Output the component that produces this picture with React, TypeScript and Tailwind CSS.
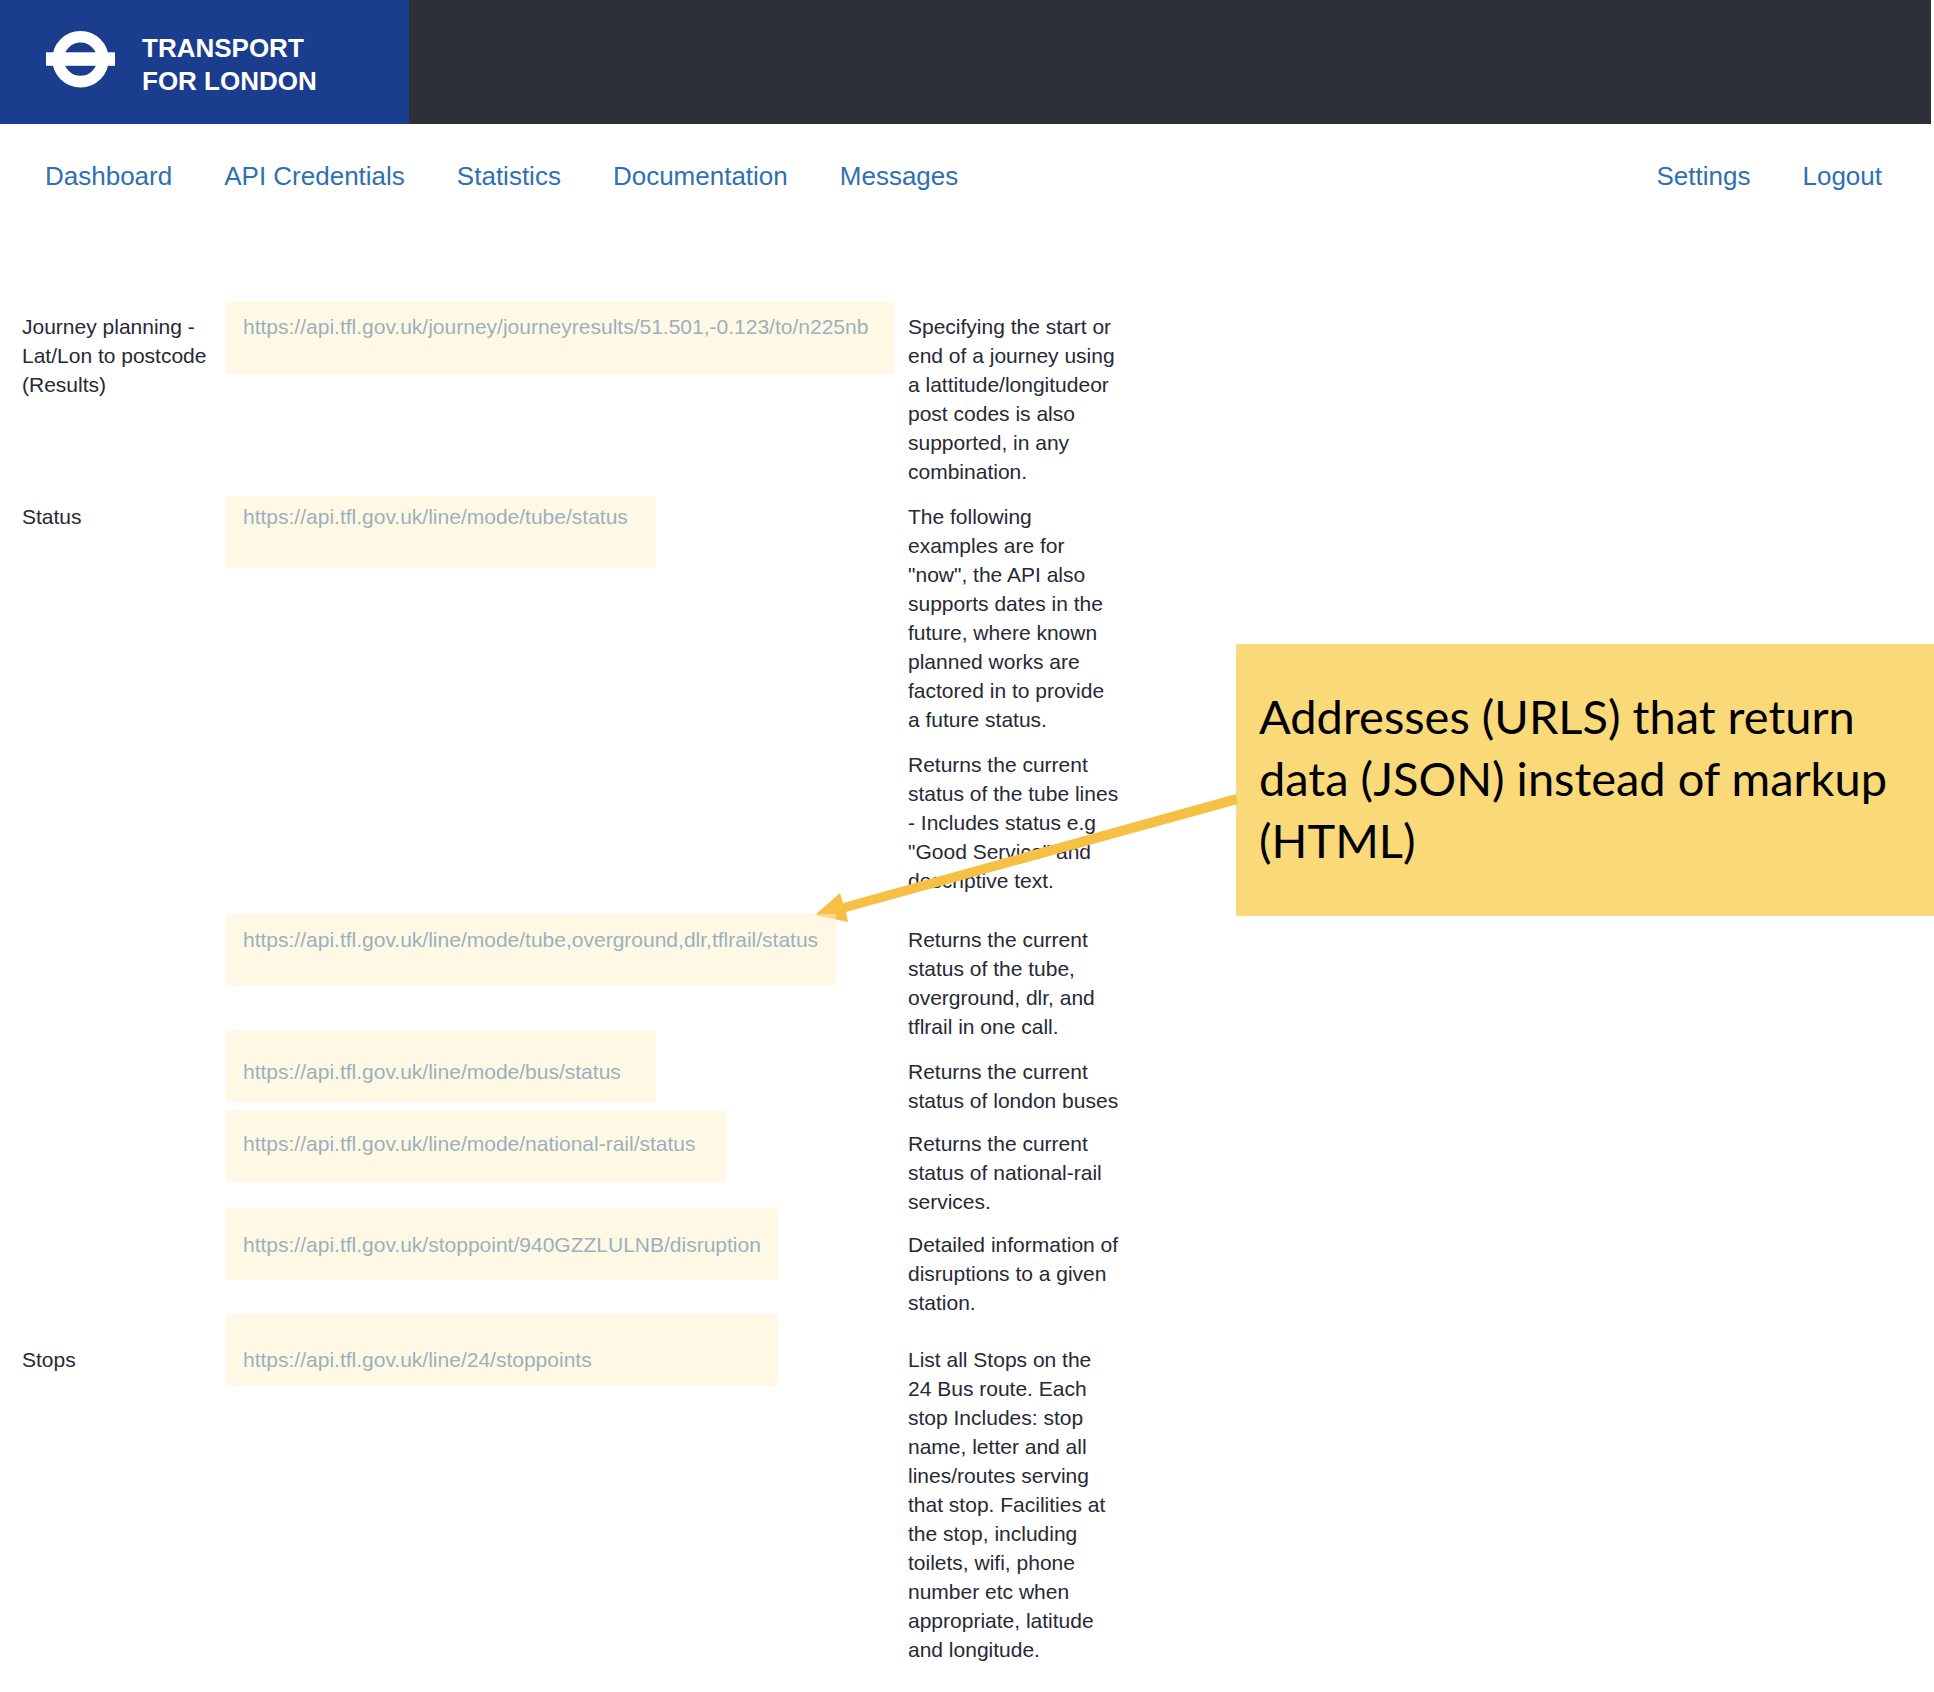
type Row = {
  topic?: string;
  url?: string;
  description: string;
  highlight?: string;
  space: string;
};

const navLinks = ['Dashboard', 'API Credentials', 'Statistics', 'Documentation', 'Messages'];
const accountLinks = ['Settings', 'Logout'];

const rows: Row[] = [
  {
    topic: 'Journey planning - Lat/Lon to postcode (Results)',
    url: 'https://api.tfl.gov.uk/journey/journeyresults/51.501,-0.123/to/n225nb',
    description:
      'Specifying the start or end of a journey using a lattitude/longitudeor post codes is also supported, in any combination.',
    highlight: '-top-[10px] w-[668px]',
    space: 'pb-[16px]',
  },
  {
    topic: 'Status',
    url: 'https://api.tfl.gov.uk/line/mode/tube/status',
    description:
      'The following examples are for "now", the API also supports dates in the future, where known planned works are factored in to provide a future status.',
    highlight: '-top-[6px] w-[430px]',
    space: 'pb-[16px]',
  },
  {
    description:
      'Returns the current status of the tube lines - Includes status e.g "Good Service" and descriptive text.',
    space: 'pb-[30px]',
  },
  {
    url: 'https://api.tfl.gov.uk/line/mode/tube,overground,dlr,tflrail/status',
    description: 'Returns the current status of the tube, overground, dlr, and tflrail in one call.',
    highlight: '-top-[11px] w-[610px]',
    space: 'pb-[16px]',
  },
  {
    url: 'https://api.tfl.gov.uk/line/mode/bus/status',
    description: 'Returns the current status of london buses',
    highlight: '-top-[27px] w-[430px]',
    space: 'pb-[14px]',
  },
  {
    url: 'https://api.tfl.gov.uk/line/mode/national-rail/status',
    description: 'Returns the current status of national-rail services.',
    highlight: '-top-[19px] w-[500px]',
    space: 'pb-[14px]',
  },
  {
    url: 'https://api.tfl.gov.uk/stoppoint/940GZZLULNB/disruption',
    description: 'Detailed information of disruptions to a given station.',
    highlight: '-top-[22px] w-[552px]',
    space: 'pb-[28px]',
  },
  {
    topic: 'Stops',
    url: 'https://api.tfl.gov.uk/line/24/stoppoints',
    description:
      'List all Stops on the 24 Bus route. Each stop Includes: stop name, letter and all lines/routes serving that stop. Facilities at the stop, including toilets, wifi, phone number etc when appropriate, latitude and longitude.',
    highlight: '-top-[31px] w-[552px]',
    space: 'pb-[16px]',
  },
];

function Roundel() {
  return (
    <svg viewBox="0 0 69 58" className="mt-[30px] h-[58px] w-[69px] shrink-0" aria-hidden="true">
      <circle cx="34.5" cy="29.2" r="22.4" fill="none" stroke="#fff" strokeWidth="11.6" />
      <rect x="0" y="22.3" width="69" height="13.5" fill="#fff" />
    </svg>
  );
}

function Header() {
  return (
    <header className="mr-[3px] flex h-[124px] bg-[#2e3039]">
      <a href="#" className="flex w-[409px] gap-[27px] bg-[#1b3d8d] pl-[46px] text-white">
        <Roundel />
        <span className="pt-[32px] text-[26px] leading-[33px] font-bold">
          TRANSPORT
          <br />
          FOR LONDON
        </span>
      </a>
    </header>
  );
}

function Nav() {
  return (
    <nav className="flex justify-between pt-[36px] pr-[52px] pl-[45px] text-[26px] leading-[33px] text-[#2f70b2]">
      <div className="flex gap-[52px]">
        {navLinks.map((label) => (
          <a key={label} href="#">
            {label}
          </a>
        ))}
      </div>
      <div className="flex gap-[52px]">
        {accountLinks.map((label) => (
          <a key={label} href="#">
            {label}
          </a>
        ))}
      </div>
    </nav>
  );
}

function Endpoints() {
  return (
    <table className="mt-[119px] ml-[22px] w-[1097px] table-fixed text-left text-[21px] leading-[29px] text-[#272935]">
      <colgroup>
        <col className="w-[221px]" />
        <col className="w-[665px]" />
        <col className="w-[211px]" />
      </colgroup>
      <tbody>
        {rows.map((row) => (
          <tr key={row.description} className="align-top">
            <th scope="row" className="pr-[20px] font-normal">
              {row.topic}
            </th>
            <td>
              {row.url && (
                <div className="relative">
                  <a href={row.url} className="text-[#2f70b2]">
                    {row.url}
                  </a>
                  <span
                    className={`pointer-events-none absolute -left-[17px] z-20 h-[72px] bg-[#fff2cc]/50 ${row.highlight}`}
                  />
                </div>
              )}
            </td>
            <td className={row.space}>{row.description}</td>
          </tr>
        ))}
      </tbody>
    </table>
  );
}

function Callout() {
  return (
    <>
      <aside className="absolute top-[644px] right-0 left-[1236px] flex h-[272px] items-center bg-[#f9d978] pr-[20px] pb-[4px] pl-[23px] font-['Lato',sans-serif] text-[47px] leading-[62px] text-black">
        <p>
          Addresses (URLS) that return
          <br />
          data (JSON) instead of markup
          <br />
          (HTML)
        </p>
      </aside>
      <svg
        viewBox="0 0 424 130"
        className="pointer-events-none absolute top-[793px] left-[815px] z-10 h-[130px] w-[424px]"
        aria-hidden="true"
      >
        <polygon points="0,122 25,100 28,110 421,1 423,11 31,119 33,129" fill="#f5c043" />
      </svg>
    </>
  );
}

export default function App() {
  return (
    <div className="relative min-h-screen overflow-hidden bg-white font-['Liberation_Sans',Arial,sans-serif]">
      <Header />
      <Nav />
      <main>
        <Endpoints />
        <Callout />
      </main>
    </div>
  );
}
